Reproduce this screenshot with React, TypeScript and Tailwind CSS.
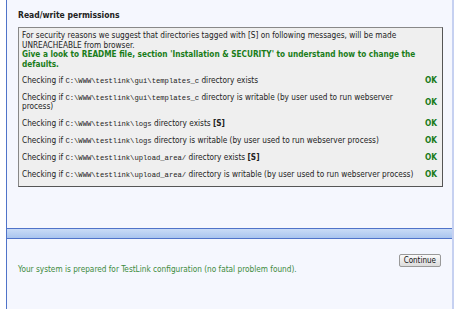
const mono = "font-['Liberation_Mono',monospace] text-[7.2px] leading-[8px]"

const Path = ({ p }: { p: string }) => <span className={mono}>{p}</span>

const rows: { text: React.ReactNode }[] = [
  { text: <>Checking if <Path p="C:\WWW\testlink\gui\templates_c" /> directory exists</> },
  { text: <>Checking if <Path p="C:\WWW\testlink\gui\templates_c" /> directory is writable (by user used to run webserver process)</> },
  { text: <>Checking if <Path p="C:\WWW\testlink\logs" /> directory exists <b>[S]</b></> },
  { text: <>Checking if <Path p="C:\WWW\testlink\logs" /> directory is writable (by user used to run webserver process)</> },
  { text: <>Checking if <Path p="C:\WWW\testlink\upload_area/" /> directory exists <b>[S]</b></> },
  { text: <>Checking if <Path p="C:\WWW\testlink\upload_area/" /> directory is writable (by user used to run webserver process)</> },
]

const App = () => {
  return (
    <div className="w-[457px] h-[309px] bg-white flex overflow-hidden font-['DejaVu_Sans_Condensed','DejaVu_Sans',sans-serif] text-[8.2px] text-[#222]">
      <div className="w-[6px] shrink-0" />
      <div className="w-[448px] border-l border-[#4f73c9] border-r-2 border-r-[#c6d1f1] bg-[#f5f7fe] flex flex-col">
        <div className="h-[228px] pl-[11px] pr-[11px] pt-[10px]">
          <h2 className="font-bold text-[8.5px] leading-[10px] text-[#222]">Read/write permissions</h2>
          <div className="mt-[7px] w-[425px] border border-[#888] border-r-[#555] border-b-[#555] bg-[#efefef] px-[3px] pt-[3px] pb-[2px]">
            <p className="leading-[9.5px]">
              For security reasons we suggest that directories tagged with [S] on following messages, will be made UNREACHEABLE from browser.
              <br />
              <b className="text-[#1a7d1a]">Give a look to README file, section 'Installation &amp; SECURITY' to understand how to change the defaults.</b>
            </p>
            <div className="mt-[3px] flex flex-col">
              {rows.map((r, i) => (
                <div key={i} className="flex items-center justify-between py-[3.75px]">
                  <span className="leading-[9.5px] w-[395px]">{r.text}</span>
                  <b className="text-[#187a18] pr-[2px] leading-[9.5px]">OK</b>
                </div>
              ))}
            </div>
          </div>
        </div>
        <div className="h-[11px] border-y border-[#4f73c9] bg-gradient-to-b from-[#c9dbf6] to-[#a9c5ef]" />
        <div className="flex items-start justify-between pl-[11px] pr-[11px] pt-[15px]">
          <p className="mt-[10px] text-[#3c8a3c] leading-[10px]">Your system is prepared for TestLink configuration (no fatal problem found).</p>
          <button className="h-[13px] px-[4px] rounded-[2px] border border-[#999] bg-gradient-to-b from-[#fafafa] to-[#dcdcdc] text-[8px] leading-[10px] text-[#111]">Continue</button>
        </div>
      </div>
    </div>
  )
}

export default App
